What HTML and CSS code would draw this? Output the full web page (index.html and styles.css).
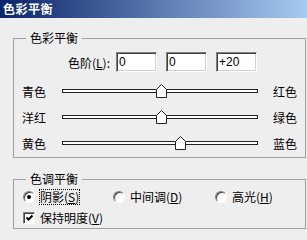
FILE: index.html
```html
<!DOCTYPE html>
<html>
<head>
<meta charset="utf-8">
<link rel="stylesheet" href="styles.css">
</head>
<body>
<div class=titlebar>色彩平衡</div>
<div class=dialog>
<fieldset class=group>
<legend>色彩平衡</legend>
<div class=levels>
<label class=levels_label>色阶(<u>L</u>):</label>
<input class=num value="0">
<input class=num value="0">
<input class=num value="+20">
</div>
<div class=slider_row>
<span class=side_left>青色</span>
<div class=track><span class=thumb style="left: 93px"><svg width="11" height="14" viewBox="0 0 11 14"><polygon points="0.5,5.5 5.5,0.5 10.5,5.5 10.5,13.5 0.5,13.5" fill="#fff" stroke="#222"/></svg></span></div>
<span class=side_right>红色</span>
</div>
<div class=slider_row>
<span class=side_left>洋红</span>
<div class=track><span class=thumb style="left: 93px"><svg width="11" height="14" viewBox="0 0 11 14"><polygon points="0.5,5.5 5.5,0.5 10.5,5.5 10.5,13.5 0.5,13.5" fill="#fff" stroke="#222"/></svg></span></div>
<span class=side_right>绿色</span>
</div>
<div class=slider_row>
<span class=side_left>黄色</span>
<div class=track><span class=thumb style="left: 112px"><svg width="11" height="14" viewBox="0 0 11 14"><polygon points="0.5,5.5 5.5,0.5 10.5,5.5 10.5,13.5 0.5,13.5" fill="#fff" stroke="#222"/></svg></span></div>
<span class=side_right>蓝色</span>
</div>
</fieldset>
<fieldset class="group tone">
<legend>色调平衡</legend>
<div class=radio_row>
<div class="option first"><span class="radio checked"></span><span class="opt_label focused">阴影(<u>S</u>)</span></div>
<div class="option second"><span class=radio></span><span class=opt_label>中间调(<u>D</u>)</span></div>
<div class=option><span class=radio></span><span class=opt_label>高光(<u>H</u>)</span></div>
</div>
<div class=check_row>
<span class=checkbox><svg width="9" height="9" viewBox="0 0 9 9"><polyline points="1.5,3.5 3.5,5.5 7.5,1.5" fill="none" stroke="#000" stroke-width="2"/></svg></span>
<span class=opt_label>保持明度(<u>V</u>)</span>
</div>
</fieldset>
</div>
</body>
</html>
```

FILE: styles.css
```css
html, body {
  margin: 0;
  background: #eeeeee;
  font-family: "Noto Sans CJK SC", sans-serif;
  font-size: 12px;
  color: #000;
  overflow: hidden;
}
.titlebar {
  height: 18px;
  line-height: 18px;
  padding-left: 3px;
  color: white;
  font-weight: bold;
  font-size: 12px;
  letter-spacing: 0.5px;
  background: linear-gradient(to right, #0a246a, #a6caf0);
}
.dialog {
  padding: 13px 1px 0 13px;
}
.group {
  margin: 0;
  padding: 0 0 1px 0;
  min-width: 0;
  border: 1px solid #a0a0a0;
}
.group legend {
  margin-left: 12px;
  padding: 0 4px;
  line-height: 14px;
  height: 14px;
}
.tone {
  margin-top: 14px;
  padding-bottom: 2px;
}
.levels {
  display: flex;
  align-items: center;
  margin-top: 7px;
  height: 20px;
}
.levels_label {
  width: 96px;
  text-align: right;
  margin-right: 6px;
}
.num {
  box-sizing: border-box;
  width: 41px;
  height: 20px;
  margin: 0 9px 0 0;
  padding: 0 2px;
  border: 1px solid;
  border-color: #808080 #ffffff #ffffff #808080;
  box-shadow: inset 1px 1px 0 #404040, inset -1px -1px 0 #d4d0c8;
  background: white;
  font-family: "Liberation Sans", sans-serif;
  font-size: 12px;
  outline: none;
}
.slider_row {
  display: flex;
  align-items: center;
  height: 26px;
  padding-left: 8px;
}
.levels + .slider_row {
  margin-top: 6px;
}
.side_left {
  width: 40px;
}
.side_right {
  margin-left: 15px;
}
.track {
  position: relative;
  box-sizing: border-box;
  width: 196px;
  height: 4px;
  border: 1px solid #222;
  background: white;
}
.thumb {
  position: absolute;
  top: -6px;
  width: 11px;
  height: 14px;
}
.thumb svg {
  display: block;
}
.radio_row {
  display: flex;
  align-items: center;
  margin-top: 3px;
  height: 16px;
  padding-left: 9px;
}
.option {
  display: flex;
  align-items: center;
}
.option.first {
  width: 90px;
}
.option.second {
  width: 102px;
}
.radio {
  position: relative;
  box-sizing: border-box;
  width: 12px;
  height: 12px;
  border-radius: 50%;
  border: 1px solid;
  border-color: #808080 #ffffff #ffffff #808080;
  box-shadow: inset 1px 1px 0 #404040;
  background: white;
}
.radio.checked::after {
  content: "";
  position: absolute;
  left: 3px;
  top: 3px;
  width: 4px;
  height: 4px;
  border-radius: 50%;
  background: black;
}
.opt_label {
  margin-left: 4px;
  border: 1px solid transparent;
  line-height: 14px;
}
.focused {
  border: 1px dotted #000;
}
.check_row {
  display: flex;
  align-items: center;
  margin-top: 5px;
  height: 16px;
  padding-left: 9px;
}
.checkbox {
  box-sizing: border-box;
  width: 12px;
  height: 12px;
  border: 1px solid;
  border-color: #808080 #ffffff #ffffff #808080;
  box-shadow: inset 1px 1px 0 #404040;
  background: white;
  display: flex;
  align-items: center;
  justify-content: center;
}
.checkbox svg {
  display: block;
}
```
